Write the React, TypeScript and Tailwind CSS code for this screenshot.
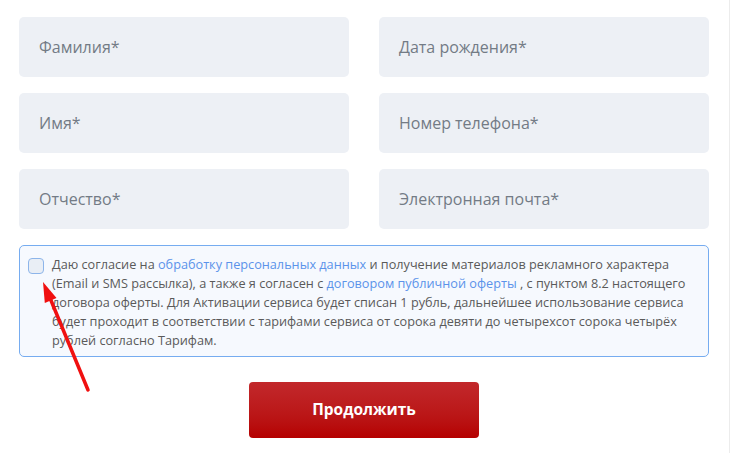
import React from "react";

const Field = ({ label }: { label: string }) => (
  <div className="h-[60px] rounded-[5px] bg-[#edf0f5] flex items-center pl-[20px] text-[16px] text-[#737b85]">
    {label}
  </div>
);

export default function App() {
  return (
    <div
      className="relative w-[730px] h-[453px] bg-white overflow-hidden"
      style={{ fontFamily: '"Open Sans", "Noto Sans", sans-serif' }}
    >
      <div className="absolute right-0 top-0 h-full w-px bg-[#ececec]" />
      <div className="w-[690px] ml-[19px] pt-[17px]">
        <div className="grid grid-cols-2 gap-x-[30px] gap-y-[16px]">
          <Field label="Фамилия*" />
          <Field label="Дата рождения*" />
          <Field label="Имя*" />
          <Field label="Номер телефона*" />
          <Field label="Отчество*" />
          <Field label="Электронная почта*" />
        </div>
        <div className="mt-[16px] h-[112px] rounded-[5px] border border-[#76acf0] bg-[#f6f9fe] flex pl-[8px] pr-[12px] pt-[9px]">
          <div className="mt-[3px] w-[16px] h-[16px] shrink-0 rounded-[4px] border border-[#8db5ea] bg-[#e9eef5]" />
          <p className="ml-[8px] text-[12.7px] leading-[19px] text-[#5a5a5a]">
            Даю согласие на <span className="text-[#5b93ea]">обработку персональных данных</span> и получение
            материалов рекламного характера (Email и SMS рассылка), а также я согласен с{" "}
            <span className="text-[#5b93ea]">договором публичной оферты</span> , с пунктом 8.2 настоящего
            договора оферты. Для Активации сервиса будет списан 1 рубль, дальнейшее использование сервиса будет
            проходит в соответствии с тарифами сервиса от сорока девяти до четырехсот сорока четырёх рублей
            согласно Тарифам.
          </p>
        </div>
        <div className="flex justify-center mt-[25px]">
          <button className="w-[230px] h-[56px] rounded-[4px] bg-gradient-to-b from-[#c2282b] to-[#b50000] text-white text-[15.5px] font-bold">
            Продолжить
          </button>
        </div>
      </div>
      <svg className="absolute left-0 top-0 pointer-events-none" width="730" height="453">
        <line x1="88" y1="390" x2="50" y2="298" stroke="#f01010" strokeWidth="3.5" strokeLinecap="round" />
        <polygon points="43,282 56.5,298 44.8,303" fill="#f01010" />
      </svg>
    </div>
  );
}
